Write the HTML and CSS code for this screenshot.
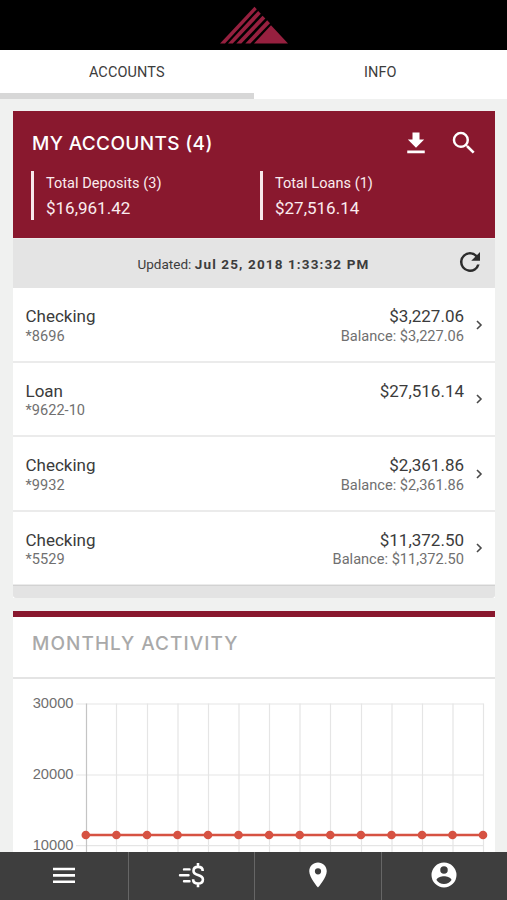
FILE: index.html
```html
<!DOCTYPE html>
<html lang="en">
<head>
<meta charset="utf-8">
<title>Accounts</title>
<meta name="viewport" content="width=device-width">
<link rel="stylesheet" href="styles.css">
</head>
<body>
<div class="app">
  <header class="brand">
    <svg width="70" height="38" viewBox="0 0 70 38" fill="#96203f">
      <path d="M35.500 .8L37.800 3.200 6 37.500H1z"/>
      <path d="M39.200 5L41.800 7.800 13.800 37.500H9z"/>
      <path d="M43.600 9.800L46.300 12.500 22.300 37.500H17.300z"/>
      <path d="M48.200 14.300L51 17.200 31.300 37.500H26.300z"/>
      <path d="M52 19.200L69 37.500H35z"/>
    </svg>
  </header>
  <nav class="tabs">
    <a class="tab tab-active">ACCOUNTS</a>
    <a class="tab">INFO</a>
  </nav>
  <main class="content">
    <section class="card">
      <div class="summary">
        <div class="summary-head">
          <h1 class="title">MY ACCOUNTS (4)</h1>
          <svg class="icon-download" width="28" height="28" viewBox="0 0 24 24" fill="#fff"><path d="M19 9h-4V3H9v6H5l7 7 7-7zM4.500 18.500v2.200h15v-2.200z"/></svg>
          <svg class="icon-search" width="30" height="30" viewBox="0 0 24 24" fill="#fff"><path d="M15.500 14h-.79l-.28-.27A6.471 6.471 0 0 0 16 9.500 6.500 6.500 0 1 0 9.500 16c1.610 0 3.090-.59 4.230-1.570l.27.28v.79l5 4.990L20.490 19l-4.990-5zm-6 0C7.010 14 5 11.990 5 9.500S7.010 5 9.500 5 14 7.010 14 9.500 11.990 14 9.500 14z"/></svg>
        </div>
        <div class="totals">
          <div class="total"><div class="total-label">Total Deposits (3)</div><div class="total-value">$16,961.42</div></div>
          <div class="total"><div class="total-label">Total Loans (1)</div><div class="total-value">$27,516.14</div></div>
        </div>
      </div>
      <div class="updated">
        <span class="updated-label">Updated:</span><b class="updated-time">Jul 25, 2018 1:33:32 PM</b>
        <svg class="icon-refresh" width="30" height="30" viewBox="0 0 24 24" fill="#2b2b2b"><path d="M17.650 6.350A7.958 7.958 0 0 0 12 4a8 8 0 1 0 7.730 10h-2.080A5.990 5.990 0 0 1 12 18c-3.310 0-6-2.690-6-6s2.690-6 6-6c1.660 0 3.140.69 4.220 1.780L13 11h7V4l-2.350 2.350z"/></svg>
      </div>
      <div class="row">
        <div class="name"><div class="main">Checking</div><div class="sub">*8696</div></div>
        <div class="amount"><div class="main">$3,227.06</div><div class="sub">Balance: $3,227.06</div></div>
        <svg class="chevron" width="7" height="10" viewBox="0 0 7 10"><path d="M1 1l4 4-4 4"/></svg>
      </div>
      <div class="row">
        <div class="name"><div class="main">Loan</div><div class="sub">*9622-10</div></div>
        <div class="amount"><div class="main">$27,516.14</div></div>
        <svg class="chevron" width="7" height="10" viewBox="0 0 7 10"><path d="M1 1l4 4-4 4"/></svg>
      </div>
      <div class="row">
        <div class="name"><div class="main">Checking</div><div class="sub">*9932</div></div>
        <div class="amount"><div class="main">$2,361.86</div><div class="sub">Balance: $2,361.86</div></div>
        <svg class="chevron" width="7" height="10" viewBox="0 0 7 10"><path d="M1 1l4 4-4 4"/></svg>
      </div>
      <div class="row">
        <div class="name"><div class="main">Checking</div><div class="sub">*5529</div></div>
        <div class="amount"><div class="main">$11,372.50</div><div class="sub">Balance: $11,372.50</div></div>
        <svg class="chevron" width="7" height="10" viewBox="0 0 7 10"><path d="M1 1l4 4-4 4"/></svg>
      </div>
      <div class="card-foot"></div>
    </section>
    <section class="card activity">
      <h2 class="activity-title">MONTHLY ACTIVITY</h2>
      <svg class="chart" width="482" height="180" viewBox="13 679 482 180">
        <g class="grid">
          <path d="M76 704H483.500M76 775H483.500M76 845.700H483.500"/>
          <path d="M116.500 703.500V859M147.500 703.500V859M178 703.500V859M208.500 703.500V859M239 703.500V859M269.500 703.500V859M300 703.500V859M330.500 703.500V859M361.500 703.500V859M392 703.500V859M422.500 703.500V859M453 703.500V859M483.500 703.500V859"/>
          <path class="axis" d="M86.500 703.500V859"/>
        </g>
        <g class="ticks">
          <text x="73.500" y="708.300">30000</text>
          <text x="73.500" y="779.300">20000</text>
          <text x="73.500" y="850">10000</text>
        </g>
        <path class="series" d="M86 835H483"/>
        <g fill="#d65242">
          <circle cx="85.800" cy="835" r="4.300"/><circle cx="116.400" cy="835" r="4.300"/><circle cx="147" cy="835" r="4.300"/><circle cx="177.500" cy="835" r="4.300"/><circle cx="208" cy="835" r="4.300"/><circle cx="238.500" cy="835" r="4.300"/><circle cx="269.100" cy="835" r="4.300"/><circle cx="299.700" cy="835" r="4.300"/><circle cx="330.300" cy="835" r="4.300"/><circle cx="360.900" cy="835" r="4.300"/><circle cx="391.500" cy="835" r="4.300"/><circle cx="422" cy="835" r="4.300"/><circle cx="452.500" cy="835" r="4.300"/><circle cx="483" cy="835" r="4.300"/>
        </g>
      </svg>
    </section>
  </main>
  <nav class="bottom">
    <a class="item"><svg width="24" height="17" viewBox="0 0 24 17"><path d="M1 2h22M1 8.400h22M1 14.800h22" stroke="#fff" stroke-width="2.600"/></svg></a>
    <a class="item"><svg width="28" height="26" viewBox="0 0 28 26" fill="none" stroke="#fff"><path d="M7 7.400h5.500M3 13.200h8.500M7 19.200h5.500" stroke-width="2.400" stroke-linecap="round"/><path d="M25.700 9c0-2.500-1.900-4.100-4.700-4.100S16.500 6.500 16.500 8.900c0 2.700 2.300 3.400 4.500 4.100 2.600.8 4.900 1.500 4.900 4.400 0 2.500-2 4.100-4.900 4.100s-4.900-1.700-4.900-4.300M21 1v3.500M21 21.800v3.500" stroke-width="2.600"/></svg></a>
    <a class="item"><svg width="30" height="30" viewBox="0 0 24 24" fill="#fff"><path d="M12 2C8.130 2 5 5.130 5 9c0 5.250 7 13 7 13s7-7.750 7-13c0-3.870-3.130-7-7-7zm0 9.500a2.500 2.500 0 1 1 0-5 2.500 2.500 0 0 1 0 5z"/></svg></a>
    <a class="item"><svg width="30" height="30" viewBox="0 0 24 24" fill="#fff"><path d="M12 2a10 10 0 1 0 0 20 10 10 0 0 0 0-20zm0 3a3 3 0 1 1 0 6 3 3 0 0 1 0-6zm0 14.200a7.200 7.200 0 0 1-6-3.220c.03-1.990 4-3.080 6-3.080s5.970 1.090 6 3.080a7.200 7.200 0 0 1-6 3.220z"/></svg></a>
  </nav>
</div>
</body>
</html>
```

FILE: styles.css
```css
* { box-sizing: border-box; }
body { margin: 0; font-family: Roboto, sans-serif; background: #f0f1f0; color: #404040; }
h1, h2 { margin: 0; font-family: Inter, sans-serif; }
svg { display: block; flex: none; }
.app { width: 507px; height: 900px; display: flex; flex-direction: column; overflow: hidden; }
.brand { flex: none; height: 49.5px; background: #000; display: flex; justify-content: center; padding: 6px 0 0; }
.tabs { flex: none; height: 49px; background: #fff; display: flex; }
.tab { width: 254px; height: 49px; padding-top: 14px; text-align: center; font-size: 14.5px; line-height: 17px; letter-spacing: .1px; color: #3c3c3c; }
.tab-active { border-bottom: 6px solid #d7d7d7; }
.content { flex: 1; min-height: 0; overflow: hidden; padding: 12.5px 12px 0 13px; }
.card { background: #fff; }
.summary { height: 127px; background: #89182e; color: #fff; padding: 17px 16px 0 19px; }
.summary-head { display: flex; align-items: center; height: 30px; }
.title { flex: 1; font-size: 19px; font-weight: 500; letter-spacing: .35px; white-space: nowrap; }
.icon-download { margin-right: 19.5px; }
.totals { display: flex; margin-top: 12.5px; margin-left: -1px; }
.total { flex: none; width: 229px; height: 49.5px; border-left: 3px solid #f8e8eb; padding: 3px 0 0 12px; color: #fbecef; }
.total:last-child { width: 200px; }
.total-label { font-size: 14.5px; line-height: 19px; letter-spacing: .05px; }
.total-value { font-size: 17px; line-height: 20px; margin-top: 5px; }
.updated { height: 50px; background: #e4e4e4; display: flex; align-items: center; justify-content: flex-end; padding: 0 10px 0 0; color: #3c3c3c; border-top: 1px solid #ececec; }
.updated-label { font-size: 13.5px; margin-right: 3.5px; }
.updated-time { font-size: 13.5px; letter-spacing: 1.13px; margin-right: 85.5px; }
.icon-refresh { margin-top: -3px; }
.row { height: 74.5px; border-bottom: 2px solid #ebebeb; padding: 18px 12px 0 12.5px; display: flex; }
.name { flex: 1; }
.amount { text-align: right; margin-right: 12px; }
.main { font-size: 17px; line-height: 20px; color: #3b3b3b; }
.sub { font-size: 14.6px; line-height: 18px; margin-top: .7px; color: #707070; }
.chevron { margin-top: 13.5px; fill: none; stroke: #4a4a4a; stroke-width: 1.6; }
.card-foot { height: 12.5px; margin-top: -1px; background: #e3e3e3; border-top: 1px solid #d2d2d2; border-radius: 0 0 3px 3px; }
.activity { margin-top: 13px; border-top: 6px solid #89182e; }
.activity-title { height: 62px; padding: 16px 0 0 19px; border-bottom: 2px solid #e4e4e4; font-size: 19px; line-height: 22px; font-weight: 500; letter-spacing: 1.05px; color: #a9a9a9; }
.grid { fill: none; stroke: #e5e5e5; stroke-width: 1.2; }
.axis { stroke: #c4c4c4; }
.ticks { font: 14.7px "Liberation Sans", sans-serif; fill: #6f6f6f; text-anchor: end; }
.series { stroke: #d65242; stroke-width: 2.4; }
.bottom { flex: none; height: 48.5px; display: grid; grid-template-columns: 128.5px 126.5px 126.5px 1fr; background: #3e3e3e; }
.item { display: flex; align-items: center; justify-content: center; border-right: 1px solid #666; padding-bottom: 1.5px; }
.item:last-child { border-right: 0; }
```
